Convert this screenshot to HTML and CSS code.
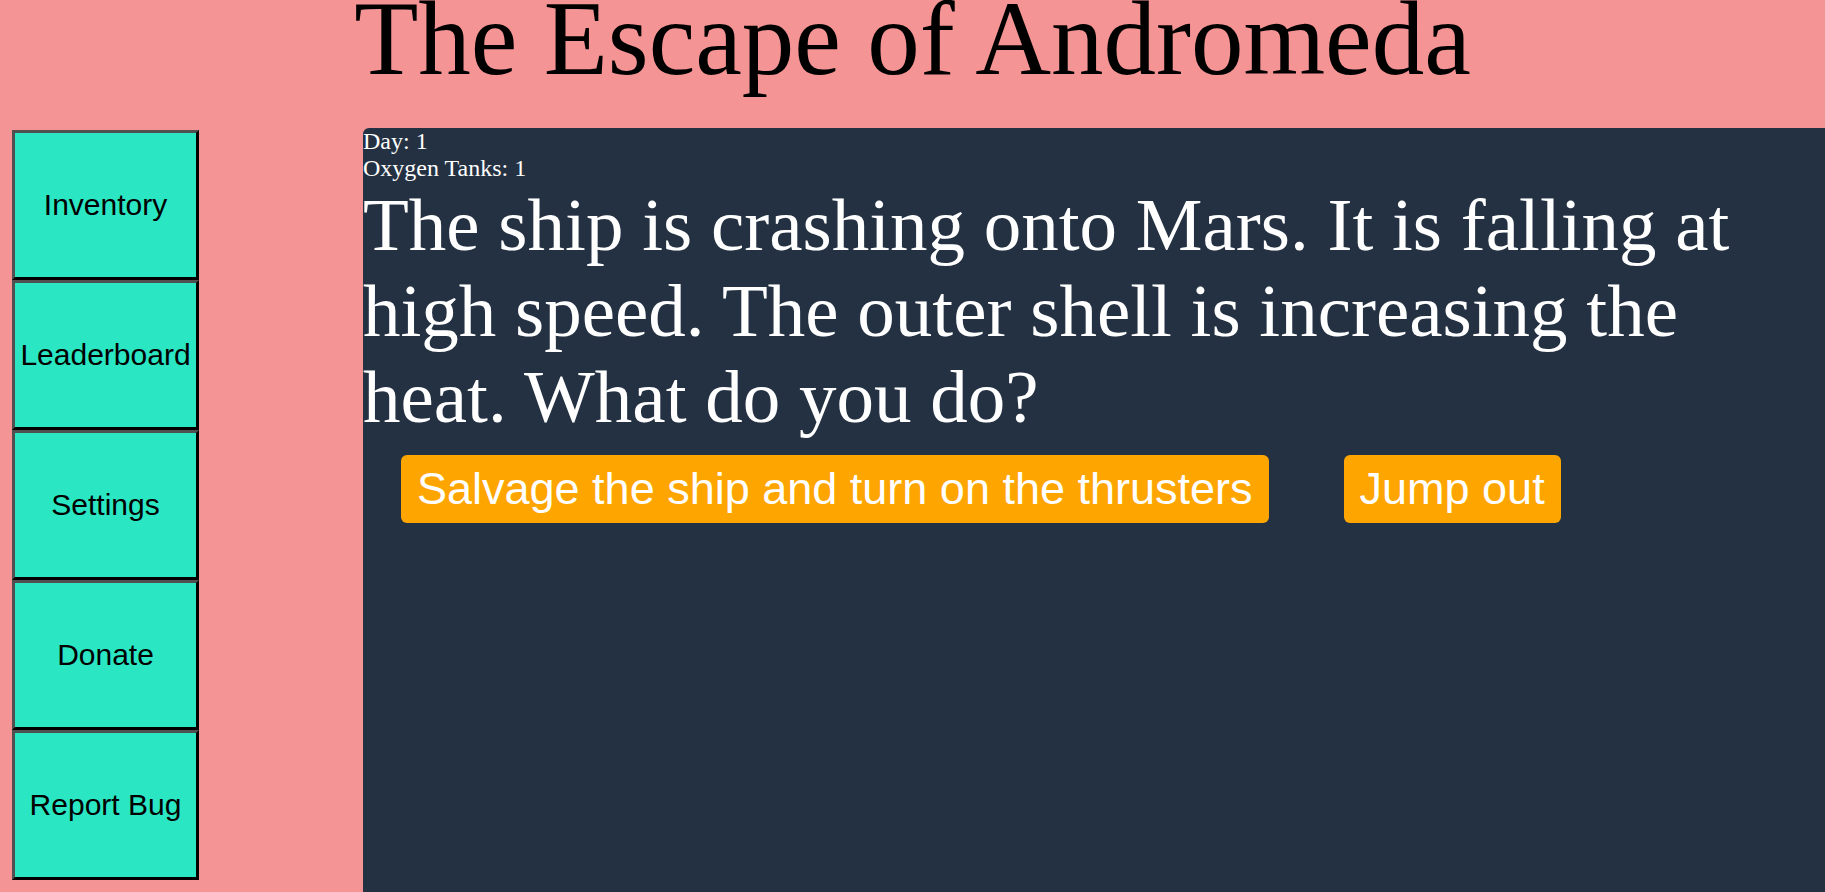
FILE: index.html
```html
<!DOCTYPE html>
<html lang="en">
<head>
<meta charset="utf-8">
<title>The Escape of Andromeda</title>
<link rel="stylesheet" href="styles.css">
</head>
<body>
<header class="header">
  <h1 class="title">The Escape of Andromeda</h1>
</header>
<div class="layout">
  <nav class="sidebar">
    <button class="side-btn">Inventory</button>
    <button class="side-btn">Leaderboard</button>
    <button class="side-btn">Settings</button>
    <button class="side-btn">Donate</button>
    <button class="side-btn">Report Bug</button>
  </nav>
  <main class="panel">
    <div class="stats">
      <div class="stat">Day: 1</div>
      <div class="stat">Oxygen Tanks: 1</div>
    </div>
    <div class="story">The ship is crashing onto Mars. It is falling at high speed. The outer shell is increasing the heat. What do you do?</div>
    <div class="choices">
      <button class="choice">Salvage the ship and turn on the thrusters</button>
      <button class="choice">Jump out</button>
    </div>
  </main>
</div>
</body>
</html>
```
FILE: styles.css
```css
html, body {
  margin: 0;
  padding: 0;
  height: 100%;
  overflow: hidden;
}
body {
  background: #f59494;
  font-family: "Liberation Serif", "Times New Roman", serif;
}
.header {
  height: 128px;
  display: flow-root;
}
.title {
  margin: 0;
  padding-top: 9px;
  font-size: 105px;
  font-weight: normal;
  line-height: 60px;
  text-align: center;
  color: #000;
  white-space: nowrap;
}
.layout {
  display: grid;
  grid-template-columns: 363px 1fr;
  height: calc(100vh - 128px);
}
.sidebar {
  display: flex;
  flex-direction: column;
  padding: 2px 0 0 12px;
}
.side-btn {
  width: 187px;
  height: 150px;
  flex: none;
  padding: 0;
  margin: 0;
  background: #2ae6c3;
  border: 3px solid;
  border-color: #505050 #000 #000 #505050;
  font-family: "Liberation Sans", Arial, sans-serif;
  font-size: 30px;
  color: #000;
  text-align: center;
  white-space: nowrap;
}
.panel {
  background: #243142;
  border-top-left-radius: 6px;
  color: #fff;
  min-height: 100%;
}
.stats {
  font-size: 24px;
  line-height: normal;
}
.story {
  font-size: 75px;
  line-height: normal;
}
.choices {
  display: flex;
  gap: 75px;
  padding-left: 38px;
  margin-top: 15px;
}
.choice {
  background: #ffa500;
  color: #fff;
  border: none;
  border-radius: 6px;
  padding: 8px 16px;
  margin: 0;
  font-family: "Liberation Sans", Arial, sans-serif;
  font-size: 45px;
  line-height: normal;
  white-space: nowrap;
}
```
